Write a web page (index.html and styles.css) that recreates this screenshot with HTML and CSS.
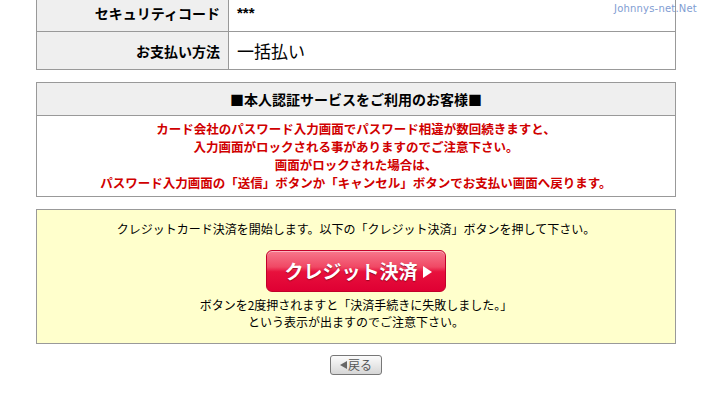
FILE: index.html
```html
<!DOCTYPE html>
<html lang="ja">
<head>
<meta charset="utf-8">
<title>クレジット決済</title>
<link rel="stylesheet" href="styles.css">
</head>
<body>
<div class="watermark">Johnnys-net.Net</div>
<div class="page">
  <table class="info">
    <tr>
      <th>セキュリティコード</th>
      <td class="stars">***</td>
    </tr>
    <tr>
      <th>お支払い方法</th>
      <td class="method">一括払い</td>
    </tr>
  </table>

  <table class="notice">
    <tr><th>■本人認証サービスをご利用のお客様■</th></tr>
    <tr><td>
      <div class="ln">カード会社のパスワード入力画面でパスワード相違が数回続きますと、</div>
      <div class="ln">入力画面がロックされる事がありますのでご注意下さい。</div>
      <div class="ln">画面がロックされた場合は、</div>
      <div class="ln">パスワード入力画面の「送信」ボタンか「キャンセル」ボタンでお支払い画面へ戻ります。</div>
    </td></tr>
  </table>

  <div class="pay">
    <p class="lead">クレジットカード決済を開始します。以下の「クレジット決済」ボタンを押して下さい。</p>
    <button class="paybtn" type="button"><span>クレジット決済</span><span class="tri"></span></button>
    <p class="warn">ボタンを2度押されますと「決済手続きに失敗しました。」</p>
    <p class="warn">という表示が出ますのでご注意下さい。</p>
  </div>

  <div class="backrow">
    <button class="back" type="button"><span class="ltri"></span>戻る</button>
  </div>
</div>
</body>
</html>
```

FILE: styles.css
```css
html, body {
  margin: 0;
  padding: 0;
  background: #ffffff;
}
body {
  font-family: "Noto Sans CJK JP", "Liberation Sans", sans-serif;
  color: #000;
  position: relative;
}
.watermark {
  position: absolute;
  top: 3px;
  left: 614px;
  font-family: "DejaVu Sans", "Liberation Sans", sans-serif;
  font-size: 10px;
  color: #7f9dd2;
  letter-spacing: 0.2px;
}
.page {
  width: 640px;
  margin: -7px 0 0 36px;
  display: flex;
  flex-direction: column;
}
table {
  border-collapse: collapse;
  width: 640px;
}
.info th, .info td {
  border: 1px solid #999;
  height: 37px;
  padding: 0;
}
.info th {
  width: 183px;
  background: #efefef;
  text-align: right;
  padding-right: 8px;
  font-size: 14px;
  font-weight: bold;
}
.info td {
  padding-left: 8px;
  background: #fff;
}
.info td.stars {
  font-size: 15px;
  font-weight: bold;
  font-family: "Liberation Sans", sans-serif;
}
.info td.method {
  font-size: 17px;
}
.notice {
  margin-top: 12px;
}
.notice th, .notice td {
  border: 1px solid #999;
  text-align: center;
}
.notice th {
  background: #efefef;
  height: 32px;
  padding: 0;
  font-size: 14px;
  font-weight: bold;
}
.notice td {
  padding: 4px 0 4px;
  color: #d00000;
  font-size: 12.5px;
  font-weight: bold;
}
.notice .ln {
  height: 18px;
  line-height: 18px;
}
.pay {
  margin-top: 12px;
  border: 1px solid #999;
  background: #ffffcc;
  display: flex;
  flex-direction: column;
  align-items: center;
  padding: 10px 0 13px;
}
.pay p {
  margin: 0;
  font-size: 12px;
  line-height: 17px;
  text-align: center;
}
.paybtn {
  margin: 13px 0 4px;
  width: 180px;
  height: 42px;
  border: 1px solid #c2002a;
  border-radius: 6px;
  background: linear-gradient(#f7788c 0%, #f04864 40%, #e8113d 52%, #df0033 100%);
  box-shadow: inset 0 1px 0 rgba(255,255,255,0.45);
  color: #fff;
  font-family: "Noto Sans CJK JP", sans-serif;
  font-size: 19px;
  font-weight: bold;
  display: flex;
  align-items: center;
  justify-content: center;
  gap: 5px;
  padding: 0 0 1px 4px;
  text-shadow: 0 1px 1px rgba(120,0,20,0.7);
  cursor: pointer;
}
.tri {
  width: 0;
  height: 0;
  border-top: 6px solid transparent;
  border-bottom: 6px solid transparent;
  border-left: 9px solid #fff;
  margin-top: 2px;
}
.backrow {
  margin-top: 11px;
  display: flex;
  justify-content: center;
}
.back {
  width: 52px;
  height: 20px;
  border: 1px solid #777;
  border-radius: 3px;
  background: linear-gradient(#fbfbfb 0%, #e9e9e9 50%, #d6d6d6 100%);
  color: #555;
  font-family: "Noto Sans CJK JP", sans-serif;
  font-size: 12px;
  line-height: 16px;
  padding: 0;
  display: flex;
  align-items: center;
  justify-content: center;
  gap: 1px;
}
.ltri {
  width: 0;
  height: 0;
  border-top: 4px solid transparent;
  border-bottom: 4px solid transparent;
  border-right: 7px solid #666;
}
```
